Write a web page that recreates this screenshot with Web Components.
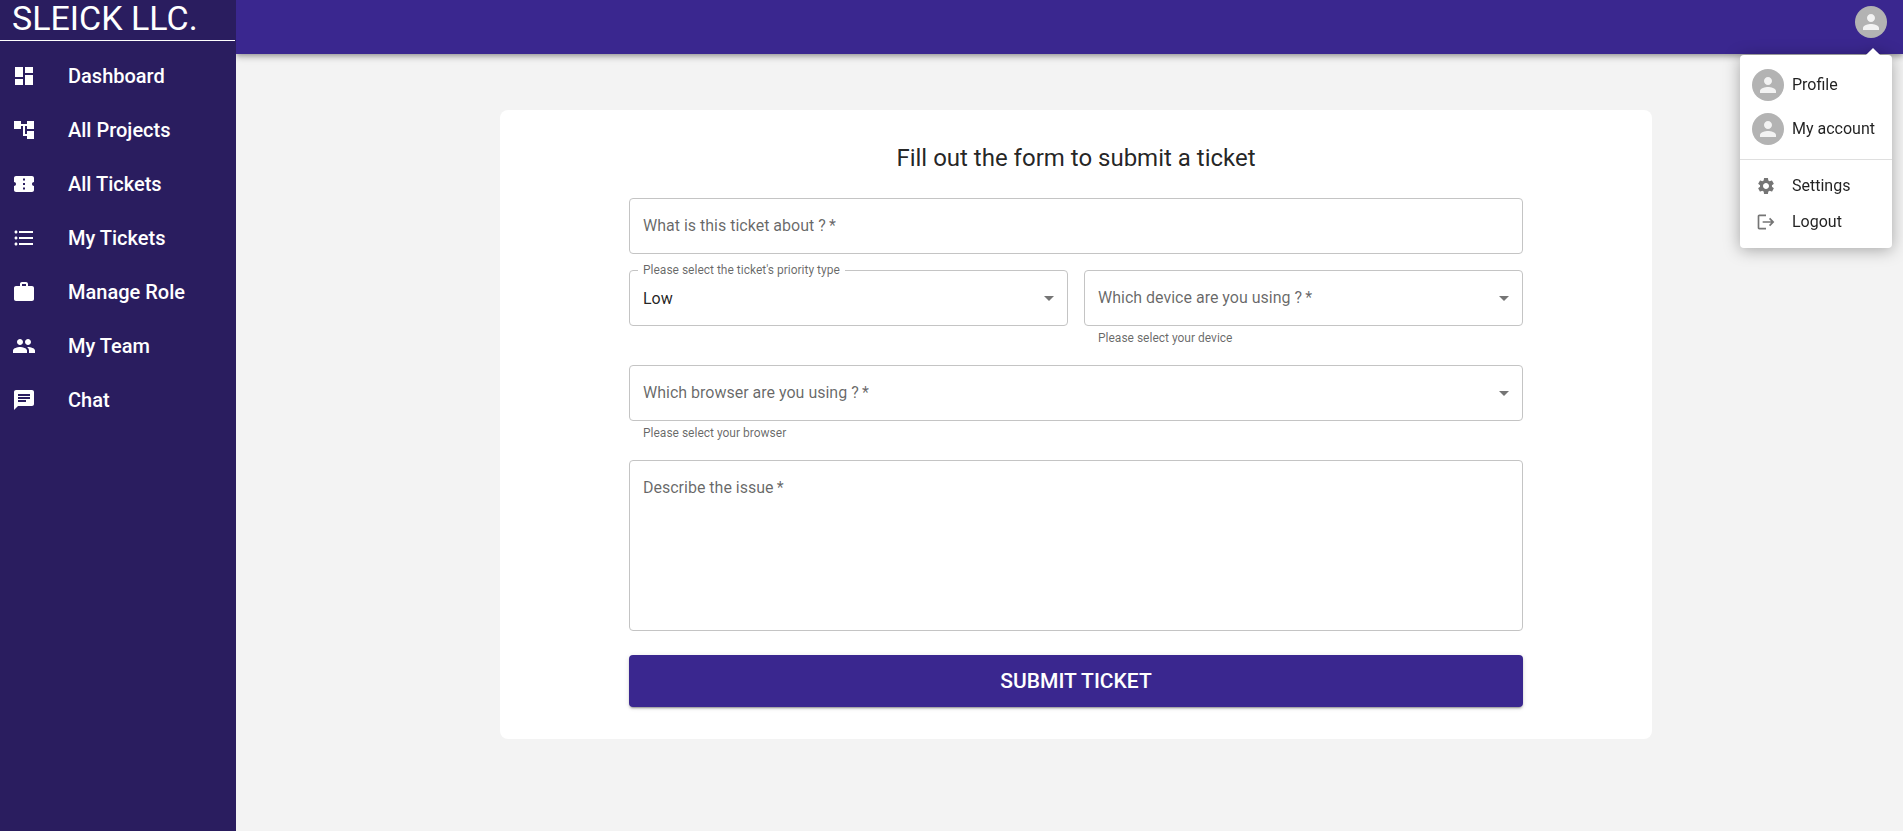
<!DOCTYPE html>
<html lang="en">
<head>
<meta charset="utf-8">
<meta name="viewport" content="width=device-width, initial-scale=1">
<title>Sleick LLC. – Submit a ticket</title>
<style>
  html { --brand: #3a278f; --brand-dark: #2a1d5f; --ink: rgba(0,0,0,.87); --muted: rgba(0,0,0,.6); }
  body { margin: 0; font: 400 16px/24px Roboto, sans-serif; color: var(--ink); background: #f3f3f3; }
</style>
</head>
<body>
<ticket-app>
  <side-bar slot="sidebar" name="SLEICK LLC.">
    <nav-item icon="dashboard">Dashboard</nav-item>
    <nav-item icon="tree">All Projects</nav-item>
    <nav-item icon="ticket">All Tickets</nav-item>
    <nav-item icon="list">My Tickets</nav-item>
    <nav-item icon="work">Manage Role</nav-item>
    <nav-item icon="group">My Team</nav-item>
    <nav-item icon="chat">Chat</nav-item>
  </side-bar>
  <top-bar slot="header">
    <menu-item avatar>Profile</menu-item>
    <menu-item avatar>My account</menu-item>
    <menu-divider></menu-divider>
    <menu-item icon="settings">Settings</menu-item>
    <menu-item icon="logout">Logout</menu-item>
  </top-bar>
  <ticket-form></ticket-form>
</ticket-app>

<script>
const icons = {
  dashboard: 'M3 13h8V3H3v10zm0 8h8v-6H3v6zm10 0h8V11h-8v10zm0-18v6h8V3h-8z',
  tree: 'M22 11V3h-7v3H9V3H2v8h7V8h2v10h4v3h7v-8h-7v3h-2V8h2v3z',
  ticket: 'M22 10V6c0-1.11-.9-2-2-2H4c-1.1 0-1.99.89-1.99 2v4c1.1 0 1.99.9 1.99 2s-.89 2-2 2v4c0 1.1.9 2 2 2h16c1.1 0 2-.9 2-2v-4c-1.1 0-2-.9-2-2s.9-2 2-2zm-9 7.5h-2v-2h2v2zm0-4.5h-2v-2h2v2zm0-4.500h-2v-2h2v2z',
  list: 'M4 10.500c-.83 0-1.500.67-1.500 1.500s.67 1.500 1.500 1.500 1.500-.67 1.500-1.500-.67-1.500-1.500-1.500zm0-6c-.83 0-1.500.67-1.500 1.500S3.170 7.500 4 7.500 5.500 6.830 5.500 6 4.830 4.500 4 4.500zm0 12c-.83 0-1.500.68-1.500 1.500s.68 1.500 1.500 1.500 1.500-.68 1.500-1.500-.67-1.500-1.500-1.500zM7 19h14v-2H7v2zm0-6h14v-2H7v2zm0-8v2h14V5H7z',
  work: 'M20 6h-4V4c0-1.110-.89-2-2-2h-4c-1.110 0-2 .89-2 2v2H4c-1.110 0-1.990.89-1.990 2L2 19c0 1.110.89 2 2 2h16c1.110 0 2-.89 2-2V8c0-1.110-.89-2-2-2zm-6 0h-4V4h4v2z',
  group: 'M16 11c1.660 0 2.990-1.340 2.990-3S17.660 5 16 5c-1.660 0-3 1.340-3 3s1.340 3 3 3zm-8 0c1.660 0 2.990-1.340 2.990-3S9.660 5 8 5C6.340 5 5 6.340 5 8s1.340 3 3 3zm0 2c-2.330 0-7 1.170-7 3.500V19h14v-2.500c0-2.330-4.670-3.500-7-3.500zm8 0c-.29 0-.62.02-.97.05 1.160.84 1.970 1.970 1.970 3.450V19h6v-2.500c0-2.330-4.670-3.500-7-3.500z',
  chat: 'M20 2H4c-1.100 0-1.990.9-1.990 2L2 22l4-4h14c1.100 0 2-.9 2-2V4c0-1.100-.9-2-2-2zM6 9h12v2H6V9zm8 5H6v-2h8v2zm4-6H6V6h12v2z',
  person: 'M12 12c2.210 0 4-1.790 4-4s-1.790-4-4-4-4 1.790-4 4 1.790 4 4 4zm0 2c-2.670 0-8 1.340-8 4v2h16v-2c0-2.660-5.330-4-8-4z',
  settings: 'M19.140 12.940c.04-.3.06-.61.06-.94 0-.32-.02-.64-.07-.94l2.030-1.580c.18-.14.23-.41.12-.61l-1.920-3.320c-.12-.22-.37-.29-.59-.22l-2.390.96c-.5-.38-1.030-.7-1.620-.94l-.36-2.540c-.04-.24-.24-.41-.48-.41h-3.840c-.24 0-.43.17-.47.41l-.36 2.540c-.59.24-1.130.57-1.620.94l-2.390-.96c-.22-.08-.47 0-.59.22L2.740 8.870c-.12.21-.08.47.12.61l2.030 1.580c-.05.3-.09.63-.09.94s.02.64.07.94l-2.030 1.580c-.18.14-.23.41-.12.61l1.920 3.320c.12.22.37.29.59.22l2.390-.96c.5.38 1.030.7 1.620.94l.36 2.540c.05.24.24.41.48.41h3.840c.24 0 .44-.17.47-.41l.36-2.540c.59-.24 1.130-.56 1.620-.94l2.390.96c.22.08.47 0 .59-.22l1.920-3.320c.12-.22.07-.47-.12-.61l-2.010-1.580zM12 15.600c-1.980 0-3.600-1.620-3.600-3.600s1.620-3.600 3.600-3.600 3.600 1.620 3.600 3.600-1.620 3.600-3.600 3.600z',
  logout: 'm17 7-1.410 1.410L18.170 11H8v2h10.170l-2.580 2.580L17 17l5-5zM4 5h8V3H4c-1.100 0-2 .9-2 2v14c0 1.100.9 2 2 2h8v-2H4V5z',
  caret: 'm7 10 5 5 5-5z'
};

class BaseElement extends HTMLElement {
  connectedCallback() {
    if (this.shadowRoot) return;
    this.attachShadow({ mode: 'open' }).innerHTML =
      `<style>*, :host { box-sizing: border-box; }</style>${this.render()}`;
  }
}

customElements.define('app-icon', class extends BaseElement {
  render() {
    return `<style>
      :host { display: inline-flex; flex: none; width: 24px; height: 24px; }
      svg { width: 100%; height: 100%; fill: currentColor; }
    </style>
    <svg viewBox="0 0 24 24" aria-hidden="true"><path d="${icons[this.getAttribute('name')]}"/></svg>`;
  }
});

customElements.define('user-avatar', class extends BaseElement {
  render() {
    return `<style>
      :host { display: inline-flex; flex: none; align-items: center; justify-content: center;
        width: 32px; height: 32px; border-radius: 50%; background: #b3b3b3; color: #f3f3f3; }
    </style><app-icon name="person"></app-icon>`;
  }
});

customElements.define('ticket-app', class extends BaseElement {
  render() {
    return `<style>
      :host { display: grid; grid-template-columns: 236px minmax(0, 1fr); min-height: 100vh; }
      .page { display: flex; flex-direction: column; }
      main { display: flex; justify-content: center; padding: 56px 0 24px 13px; }
    </style>
    <slot name="sidebar"></slot>
    <div class="page"><slot name="header"></slot><main><slot></slot></main></div>`;
  }
});

customElements.define('side-bar', class extends BaseElement {
  render() {
    return `<style>
      :host { display: block; background: var(--brand-dark); color: #fff; }
      .name { height: 41px; margin: 0 1px 8px 0; padding-left: 12px; border-bottom: 1px solid #fff;
        font-size: 34px; font-weight: 400; line-height: 36px; white-space: nowrap; }
      nav { display: flex; flex-direction: column; }
    </style>
    <div class="name">${this.getAttribute('name')}</div>
    <nav aria-label="Main"><slot></slot></nav>`;
  }
});

customElements.define('nav-item', class extends BaseElement {
  render() {
    return `<style>
      :host { display: block; }
      a { display: flex; align-items: center; gap: 32px; height: 54px; padding: 0 12px;
        color: inherit; text-decoration: none; font-size: 20px; font-weight: 500; }
    </style>
    <a href="#"><app-icon name="${this.getAttribute('icon')}"></app-icon><slot></slot></a>`;
  }
});

customElements.define('top-bar', class extends BaseElement {
  render() {
    return `<style>
      :host { display: block; position: relative; z-index: 1; }
      header { display: flex; justify-content: flex-end; align-items: flex-start; height: 54px;
        padding: 6px 16px; background: var(--brand); clip-path: inset(0 0 -12px 0);
        box-shadow: 0 2px 4px -1px rgba(0,0,0,.2), 0 4px 5px rgba(0,0,0,.14), 0 1px 10px rgba(0,0,0,.12); }
      button { display: flex; padding: 0; border: 0; border-radius: 50%; background: none; cursor: pointer; }
      .menu { position: absolute; top: 55px; right: 11px; min-width: 152px; padding: 8px 0;
        border-radius: 4px; background: #fff; filter: drop-shadow(0 2px 8px rgba(0,0,0,.32)); }
      .menu::before { content: ""; position: absolute; top: -5px; right: 14px; width: 10px; height: 10px;
        background: #fff; transform: rotate(45deg); }
    </style>
    <header><button type="button" aria-label="Account" aria-haspopup="menu" aria-expanded="true"><user-avatar></user-avatar></button></header>
    <div class="menu"><slot></slot></div>`;
  }
});

customElements.define('menu-divider', class extends BaseElement {
  render() {
    return `<style>:host { display: block; height: 1px; margin: 8px 0; background: #dfdfdf; }</style>`;
  }
});

customElements.define('menu-item', class extends BaseElement {
  render() {
    const avatar = this.hasAttribute('avatar');
    const picture = avatar ? '<user-avatar></user-avatar>' : `<app-icon name="${this.getAttribute('icon')}"></app-icon>`;
    return `<style>
      :host { display: block; }
      button { display: flex; align-items: center; width: 100%; padding: 6px 16px 6px 12px; border: 0;
        background: none; font: inherit; color: inherit; text-align: left; white-space: nowrap; cursor: pointer; }
      .picture { display: flex; justify-content: center; width: 28px; margin-right: 12px; color: #757575; }
      .picture.avatar { width: 32px; margin-right: 8px; }
      .picture:not(.avatar) app-icon { width: 20px; height: 20px; }
    </style>
    <button type="button"><span class="picture ${avatar ? 'avatar' : ''}">${picture}</span><slot></slot></button>`;
  }
});

customElements.define('form-field', class extends BaseElement {
  render() {
    const type = this.getAttribute('type') || 'text';
    const label = this.getAttribute('label') + (this.hasAttribute('required') ? '&thinsp;*' : '');
    const value = this.getAttribute('value') || '';
    const hint = this.getAttribute('hint');
    const required = this.hasAttribute('required') ? 'required' : '';
    const control = type === 'select'
      ? `<select id="control" ${required}><option>${value}</option></select><app-icon name="caret"></app-icon>`
      : type === 'textarea' ? `<textarea id="control" ${required}></textarea>`
      : `<input id="control" type="text" ${required}>`;
    return `<style>
      :host { display: block; }
      .box { display: grid; position: relative; }
      .box > * { grid-area: 1 / 1; }
      input, select, textarea { display: block; width: 100%; height: 56px; margin: 0; padding: 16px 13px;
        border: 1px solid #c4c4c4; border-radius: 4px; background: #fff; color: inherit;
        font: inherit; appearance: none; resize: none; }
      select { padding: 16px 13px 14px; }
      textarea { height: 171px; }
      label { justify-self: start; align-self: start; margin: 16px 14px; color: var(--muted); pointer-events: none; }
      label.raised { margin: -10px 9px; padding: 0 5px; background: #fff; font-size: 12px; line-height: 20px; }
      app-icon { justify-self: end; align-self: center; margin-right: 7px; color: #757575; pointer-events: none; }
      .hint { margin: 2px 14px 0; padding-bottom: 1px; color: var(--muted); font-size: 12px; line-height: 20px; }
    </style>
    <div class="box">${control}<label for="control" class="${value ? 'raised' : ''}">${label}</label></div>
    ${hint ? `<div class="hint">${hint}</div>` : ''}`;
  }
});

customElements.define('ticket-form', class extends BaseElement {
  render() {
    return `<style>
      :host { display: flex; justify-content: center; width: 100%; max-width: 1152px; padding: 32px;
        border-radius: 8px; background: #fff; }
      form { display: flex; flex-direction: column; gap: 16px; width: 100%; max-width: 894px; }
      h1 { margin: 0 0 8px; font-size: 24px; font-weight: 400; line-height: 32px; text-align: center; }
      .pair { display: grid; grid-template-columns: 1fr 1fr; gap: 16px; }
      button { height: 52px; margin-top: 8px; border: 0; border-radius: 4px; background: var(--brand); color: #fff;
        font: 500 21px/24px Roboto, sans-serif; text-transform: uppercase; cursor: pointer;
        box-shadow: 0 3px 1px -2px rgba(0,0,0,.2), 0 2px 2px rgba(0,0,0,.14), 0 1px 5px rgba(0,0,0,.12); }
    </style>
    <form>
      <h1>Fill out the form to submit a ticket</h1>
      <form-field label="What is this ticket about ?" required></form-field>
      <div class="pair">
        <form-field type="select" label="Please select the ticket's priority type" value="Low"></form-field>
        <form-field type="select" label="Which device are you using ?" required hint="Please select your device"></form-field>
      </div>
      <form-field type="select" label="Which browser are you using ?" required hint="Please select your browser"></form-field>
      <form-field type="textarea" label="Describe the issue" required></form-field>
      <button type="submit">Submit Ticket</button>
    </form>`;
  }
});
</script>
</body>
</html>
